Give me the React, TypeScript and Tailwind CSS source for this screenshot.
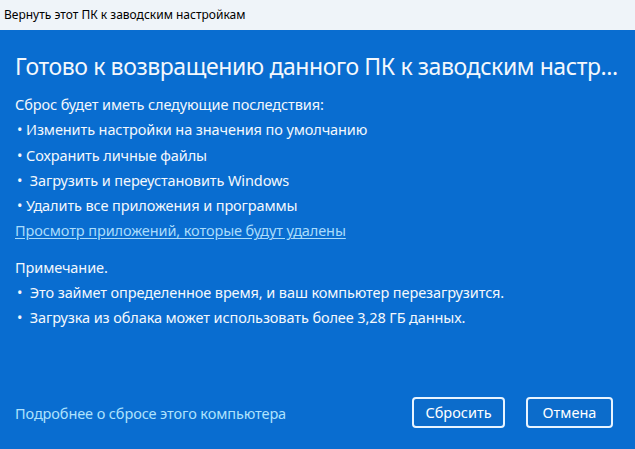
export default function App() {
  const font = { fontFamily: '"Segoe UI", "Noto Sans", sans-serif' };
  return (
    <div className="w-[635px] h-[449px] flex flex-col overflow-hidden" style={font}>
      <div className="h-[30px] bg-[#eff4f9] flex items-center pl-[4px] text-[12px] text-black">
        Вернуть этот ПК к заводским настройкам
      </div>
      <div className="flex-1 bg-[#096dd0] text-[#f4f8fc] flex flex-col px-[15px]">
        <div className="mt-[21px] text-[23px] leading-[30px] whitespace-nowrap tracking-[-0.4px]">
          Готово к возвращению данного ПК к заводским настр...
        </div>
        <div className="mt-[11px] text-[14.5px] leading-[25.3px] tracking-[-0.1px]">
          <div>Сброс будет иметь следующие последствия:</div>
          <div className="pl-[2px]">• Изменить настройки на значения по умолчанию</div>
          <div className="pl-[2px]">• Сохранить личные файлы</div>
          <div className="pl-[2px]">•&nbsp; Загрузить и переустановить Windows</div>
          <div className="pl-[2px]">• Удалить все приложения и программы</div>
          <div className="text-[#a9dcfb] underline underline-offset-2">Просмотр приложений, которые будут удалены</div>
          <div className="mt-[11px]">Примечание.</div>
          <div className="pl-[2px]">•&nbsp; Это займет определенное время, и ваш компьютер перезагрузится.</div>
          <div className="pl-[2px]">•&nbsp; Загрузка из облака может использовать более 3,28 ГБ данных.</div>
        </div>
        <div className="flex-1" />
        <div className="flex items-center justify-between mb-[21px] pr-[7px]">
          <div className="text-[#aee2fd] text-[14.5px] tracking-[-0.1px] pt-[3px]">Подробнее о сбросе этого компьютера</div>
          <div className="flex gap-[21px]">
            <button className="w-[93px] h-[31px] rounded-[4px] border-2 border-[#e8f4ff] bg-[#0c6ccb] text-[14.5px] text-white">Сбросить</button>
            <button className="w-[87px] h-[31px] rounded-[4px] border-2 border-[#e8f4ff] bg-[#0c6ccb] text-[14.5px] text-white">Отмена</button>
          </div>
        </div>
      </div>
    </div>
  );
}
